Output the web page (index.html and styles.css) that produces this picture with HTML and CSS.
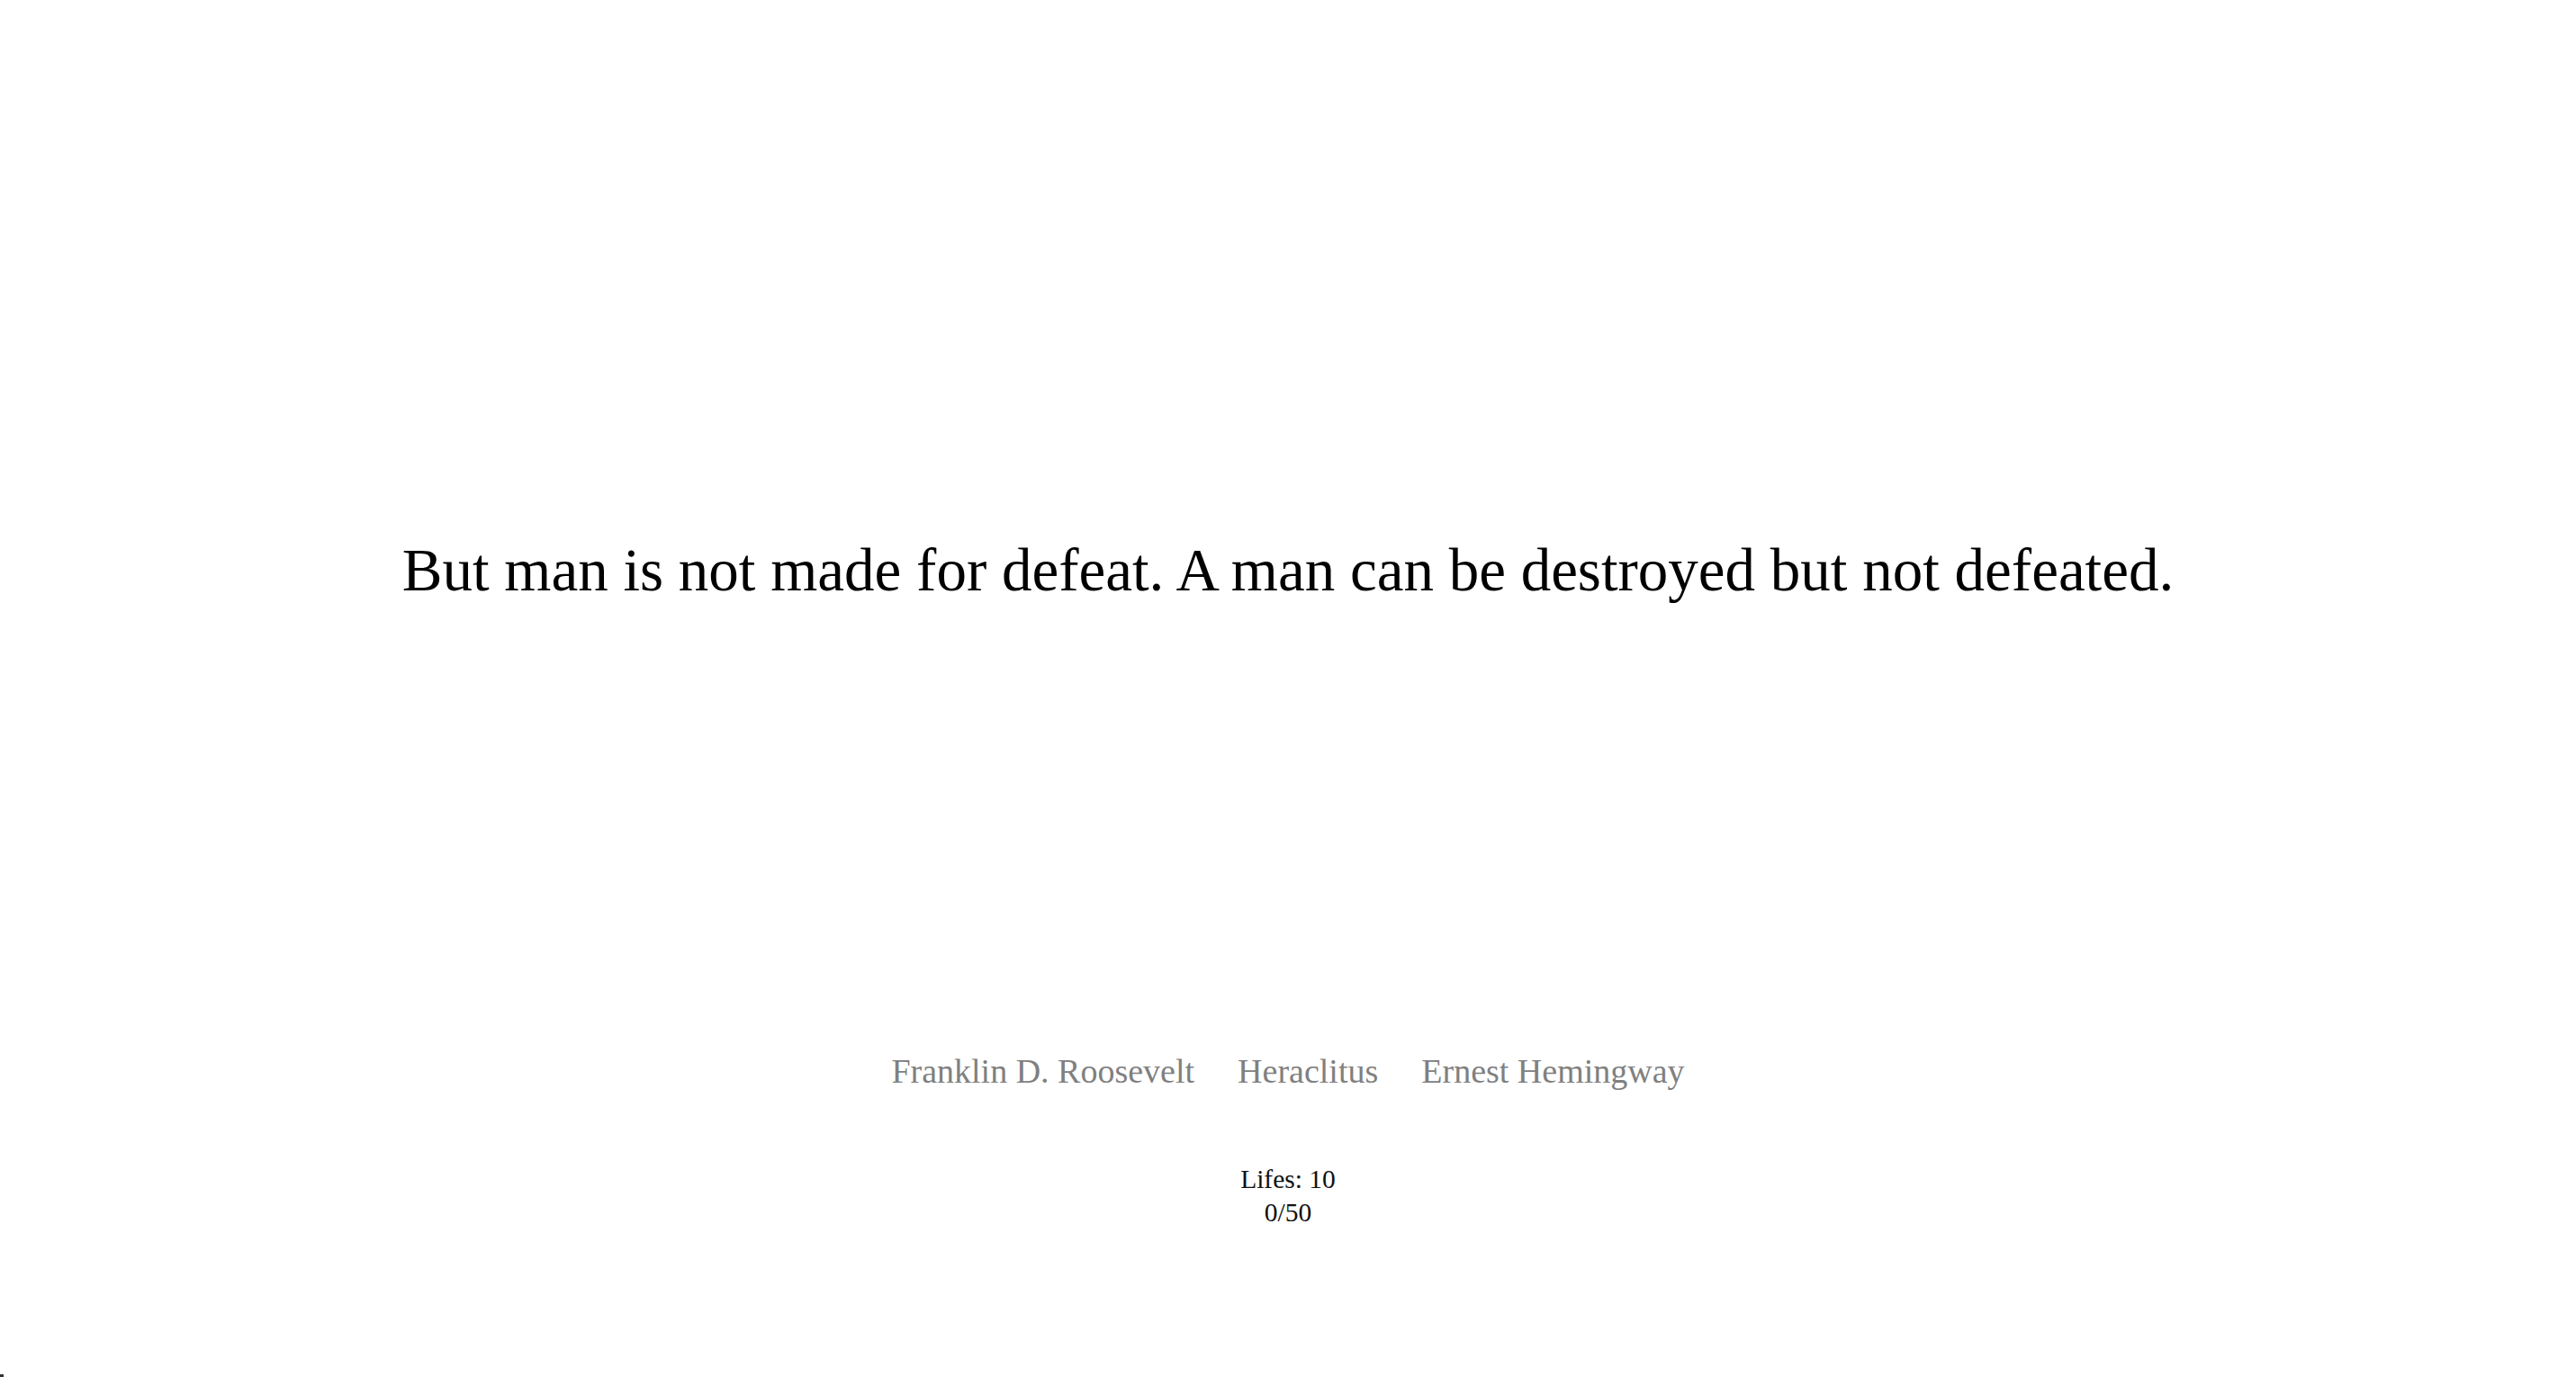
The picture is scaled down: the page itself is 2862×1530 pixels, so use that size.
FILE: index.html
```html
<!DOCTYPE html>
<html lang="en">
<head>
<meta charset="utf-8">
<title>Quote game</title>
<link rel="stylesheet" href="styles.css">
</head>
<body>
<main class="page">
  <section class="quote-area">
    <p class="quote">But man is not made for defeat. A man can be destroyed but not defeated.</p>
  </section>
  <nav class="authors">
    <span class="author">Franklin D. Roosevelt</span>
    <span class="author">Heraclitus</span>
    <span class="author">Ernest Hemingway</span>
  </nav>
  <section class="stats">
    <div class="stat">Lifes: 10</div>
    <div class="stat">0/50</div>
  </section>
</main>
<div class="corner"></div>
</body>
</html>
```
FILE: styles.css
```css
html, body {
  margin: 0;
  padding: 0;
  background: #ffffff;
}
body {
  font-family: "Liberation Serif", "DejaVu Serif", serif;
  color: #111;
  overflow: hidden;
}
.page {
  height: 1530px;
  display: flex;
  flex-direction: column;
  align-items: center;
}
.quote-area {
  padding-top: 590px;
}
.quote {
  margin: 0;
  font-size: 67px;
  line-height: 86px;
  color: #000;
  white-space: nowrap;
}
.authors {
  margin-top: 490px;
  display: flex;
  gap: 48px;
  font-size: 38px;
  line-height: 48px;
  color: #808080;
}
.stats {
  margin-top: 78px;
  display: flex;
  flex-direction: column;
  align-items: center;
  font-size: 29.5px;
  line-height: 37px;
  color: #111;
}
.corner {
  position: fixed;
  left: 0;
  bottom: 0;
  width: 4px;
  height: 3px;
  background: #333;
}
```
